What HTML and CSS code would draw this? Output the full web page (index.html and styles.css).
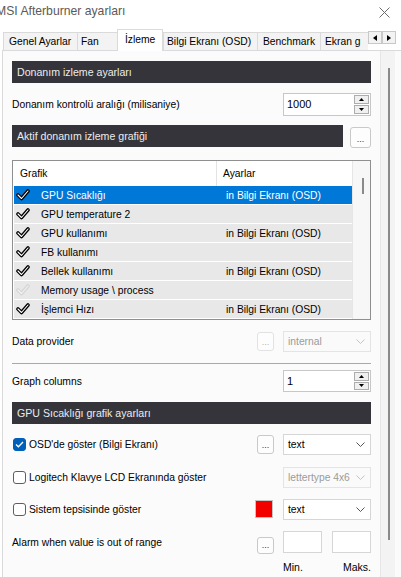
FILE: index.html
```html
<!DOCTYPE html>
<html lang="tr">
<head>
<meta charset="utf-8">
<title>MSI Afterburner ayarları</title>
<link rel="stylesheet" href="styles.css">
</head>
<body>
<div class="window">
  <div class="titlebar">
    <span class="title">MSI Afterburner ayarları</span>
    <svg class="close" width="11" height="11" viewBox="0 0 11 11"><path d="M0.5 0.5 L10.5 10.5 M10.5 0.5 L0.5 10.5" stroke="#6b6b6b" stroke-width="1"/></svg>
  </div>
  <div class="tabs">
    <div class="tab t1">Genel Ayarlar</div>
    <div class="tab t2">Fan</div>
    <div class="tab t3 active">İzleme</div>
    <div class="tab t4">Bilgi Ekranı (OSD)</div>
    <div class="tab t5">Benchmark</div>
    <div class="tab t6">Ekran g</div>
    <div class="tabarrows">
      <div class="tabarrow"><svg width="4" height="6" viewBox="0 0 4 6"><path d="M4 0 L0 3 L4 6 Z" fill="#000"/></svg></div>
      <div class="tabarrow"><svg width="4" height="6" viewBox="0 0 4 6"><path d="M0 0 L4 3 L0 6 Z" fill="#000"/></svg></div>
    </div>
  </div>
  <div class="panel">
    <div class="content">
      <div class="bar h1">Donanım izleme ayarları</div>

      <div class="row r1">
        <span class="label">Donanım kontrolü aralığı (milisaniye)</span>
        <div class="spin">
          <div class="spin-val">1000</div>
          <div class="spin-btns">
            <div class="spin-btn"><svg width="5" height="3" viewBox="0 0 5 3"><path d="M0 3 L2.5 0 L5 3 Z" fill="#000"/></svg></div>
            <div class="spin-btn"><svg width="5" height="3" viewBox="0 0 5 3"><path d="M0 0 L2.5 3 L5 0 Z" fill="#000"/></svg></div>
          </div>
        </div>
      </div>

      <div class="row r2">
        <div class="bar grow">Aktif donanım izleme grafiği</div>
        <div class="dots dots-lg">...</div>
      </div>

      <div class="list">
        <div class="list-main">
          <div class="list-head">
            <div class="col1">Grafik</div>
            <div class="col2">Ayarlar</div>
          </div>
          <div class="item sel"><span class="chk"><svg width="14" height="12" viewBox="0 0 14 12"><path d="M2 6 L5.5 9.5 L12 2" fill="none" stroke="#000" stroke-width="3.6" stroke-linejoin="round" stroke-linecap="round"/><path d="M2 6 L5.5 9.5 L12 2" fill="none" stroke="#fff" stroke-width="1.1" stroke-linejoin="round" stroke-linecap="round"/></svg></span><span class="c1">GPU Sıcaklığı</span><span class="c2">in Bilgi Ekranı (OSD)</span></div>
          <div class="item"><span class="chk"><svg width="14" height="12" viewBox="0 0 14 12"><path d="M2 6 L5.5 9.5 L12 2" fill="none" stroke="#000" stroke-width="3.6" stroke-linejoin="round" stroke-linecap="round"/><path d="M2 6 L5.5 9.5 L12 2" fill="none" stroke="#fff" stroke-width="1.1" stroke-linejoin="round" stroke-linecap="round"/></svg></span><span class="c1">GPU temperature 2</span><span class="c2"></span></div>
          <div class="item"><span class="chk"><svg width="14" height="12" viewBox="0 0 14 12"><path d="M2 6 L5.5 9.5 L12 2" fill="none" stroke="#000" stroke-width="3.6" stroke-linejoin="round" stroke-linecap="round"/><path d="M2 6 L5.5 9.5 L12 2" fill="none" stroke="#fff" stroke-width="1.1" stroke-linejoin="round" stroke-linecap="round"/></svg></span><span class="c1">GPU kullanımı</span><span class="c2">in Bilgi Ekranı (OSD)</span></div>
          <div class="item"><span class="chk"><svg width="14" height="12" viewBox="0 0 14 12"><path d="M2 6 L5.5 9.5 L12 2" fill="none" stroke="#000" stroke-width="3.6" stroke-linejoin="round" stroke-linecap="round"/><path d="M2 6 L5.5 9.5 L12 2" fill="none" stroke="#fff" stroke-width="1.1" stroke-linejoin="round" stroke-linecap="round"/></svg></span><span class="c1">FB kullanımı</span><span class="c2"></span></div>
          <div class="item"><span class="chk"><svg width="14" height="12" viewBox="0 0 14 12"><path d="M2 6 L5.5 9.5 L12 2" fill="none" stroke="#000" stroke-width="3.6" stroke-linejoin="round" stroke-linecap="round"/><path d="M2 6 L5.5 9.5 L12 2" fill="none" stroke="#fff" stroke-width="1.1" stroke-linejoin="round" stroke-linecap="round"/></svg></span><span class="c1">Bellek kullanımı</span><span class="c2">in Bilgi Ekranı (OSD)</span></div>
          <div class="item"><span class="chk"><svg width="14" height="12" viewBox="0 0 14 12"><path d="M2 6 L5.5 9.5 L12 2" fill="none" stroke="#d6d6d6" stroke-width="3.6" stroke-linejoin="round" stroke-linecap="round"/><path d="M2 6 L5.5 9.5 L12 2" fill="none" stroke="#f4f4f4" stroke-width="1.1" stroke-linejoin="round" stroke-linecap="round"/></svg></span><span class="c1">Memory usage \ process</span><span class="c2"></span></div>
          <div class="item"><span class="chk"><svg width="14" height="12" viewBox="0 0 14 12"><path d="M2 6 L5.5 9.5 L12 2" fill="none" stroke="#000" stroke-width="3.6" stroke-linejoin="round" stroke-linecap="round"/><path d="M2 6 L5.5 9.5 L12 2" fill="none" stroke="#fff" stroke-width="1.1" stroke-linejoin="round" stroke-linecap="round"/></svg></span><span class="c1">İşlemci Hızı</span><span class="c2">in Bilgi Ekranı (OSD)</span></div>
          <div class="item"><span class="chk"><svg width="14" height="12" viewBox="0 0 14 12"><path d="M2 6 L5.5 9.5 L12 2" fill="none" stroke="#000" stroke-width="3.6" stroke-linejoin="round" stroke-linecap="round"/><path d="M2 6 L5.5 9.5 L12 2" fill="none" stroke="#fff" stroke-width="1.1" stroke-linejoin="round" stroke-linecap="round"/></svg></span><span class="c1"></span><span class="c2"></span></div>
        </div>
        <div class="list-scroll"><div class="list-thumb"></div></div>
      </div>

      <div class="row r3">
        <span class="label">Data provider</span>
        <div class="ctrls">
          <div class="dots disabled">...</div>
          <div class="select disabled"><span>internal</span><svg width="9" height="5" viewBox="0 0 9 5"><path d="M0.5 0.5 L4.5 4.5 L8.5 0.5" fill="none" stroke="#c4c4c4" stroke-width="1"/></svg></div>
        </div>
      </div>

      <div class="sep"></div>

      <div class="row r4">
        <span class="label">Graph columns</span>
        <div class="spin spin-sm">
          <div class="spin-val">1</div>
          <div class="spin-btns">
            <div class="spin-btn"><svg width="5" height="3" viewBox="0 0 5 3"><path d="M0 3 L2.5 0 L5 3 Z" fill="#000"/></svg></div>
            <div class="spin-btn"><svg width="5" height="3" viewBox="0 0 5 3"><path d="M0 0 L2.5 3 L5 0 Z" fill="#000"/></svg></div>
          </div>
        </div>
      </div>

      <div class="bar h3">GPU Sıcaklığı grafik ayarları</div>

      <div class="row r5">
        <label class="cb"><span class="box on"><svg width="9" height="7" viewBox="0 0 9 7"><path d="M1 3.5 L3.4 5.8 L8 1" fill="none" stroke="#fff" stroke-width="1.3"/></svg></span>OSD'de göster (Bilgi Ekranı)</label>
        <div class="ctrls">
          <div class="dots">...</div>
          <div class="select"><span>text</span><svg width="9" height="5" viewBox="0 0 9 5"><path d="M0.5 0.5 L4.5 4.5 L8.5 0.5" fill="none" stroke="#555" stroke-width="1"/></svg></div>
        </div>
      </div>

      <div class="row r6">
        <label class="cb"><span class="box"></span>Logitech Klavye LCD Ekranında göster</label>
        <div class="ctrls">
          <div class="select disabled"><span>lettertype 4x6</span><svg width="9" height="5" viewBox="0 0 9 5"><path d="M0.5 0.5 L4.5 4.5 L8.5 0.5" fill="none" stroke="#c4c4c4" stroke-width="1"/></svg></div>
        </div>
      </div>

      <div class="row r7">
        <label class="cb"><span class="box"></span>Sistem tepsisinde göster</label>
        <div class="ctrls">
          <div class="swatch"></div>
          <div class="select"><span>text</span><svg width="9" height="5" viewBox="0 0 9 5"><path d="M0.5 0.5 L4.5 4.5 L8.5 0.5" fill="none" stroke="#555" stroke-width="1"/></svg></div>
        </div>
      </div>

      <div class="row r8">
        <span class="label alarm-label">Alarm when value is out of range</span>
        <div class="ctrls">
          <div class="dots dots-alarm">...</div>
          <div class="field"></div>
          <div class="field"></div>
        </div>
      </div>
      <div class="minmax">
        <span>Min.</span>
        <span>Maks.</span>
      </div>
    </div>
    <div class="vscroll"><div class="vthumb"></div></div>
  </div>
</div>
</body>
</html>
```

FILE: styles.css
```css
* { box-sizing: border-box; }
html, body { margin: 0; padding: 0; }
body {
  background: #ffffff;
  font-family: "Liberation Sans", Arial, sans-serif;
  font-size: 10.3px;
  color: #000;
}
.window {
  width: 401px;
  height: 577px;
  overflow: hidden;
  background: #ffffff;
}
.titlebar {
  height: 28px;
  display: flex;
  align-items: center;
  justify-content: space-between;
  padding-right: 11px;
}
.title {
  font-size: 12.2px;
  color: #5a5a5a;
  margin-left: -4px;
  margin-top: -7px;
}
.close { margin-top: -4px; }

.tabs {
  height: 22px;
  display: flex;
  align-items: flex-end;
  padding-left: 3px;
  position: relative;
}
.tab {
  height: 18px;
  background: #f3f3f3;
  border: 1px solid #dadada;
  border-bottom: none;
  border-right: none;
  padding-left: 5px;
  line-height: 17px;
  white-space: nowrap;
  overflow: hidden;
  color: #000;
}
.t1 { width: 74px; }
.t2 { width: 40px; padding-left: 3px; }
.t3 { width: 46px; }
.t4 { width: 94px; padding-left: 3px; }
.t5 { width: 63px; padding-left: 5px; }
.t6 { width: 48px; padding-left: 4px; }
.tab.active {
  height: 22px;
  background: #ffffff;
  border-right: 1px solid #dadada;
  padding-left: 7px;
  line-height: 20px;
  margin-bottom: -1px;
  position: relative;
  z-index: 1;
}
.tabarrows {
  display: flex;
  margin-bottom: 6px;
  margin-left: 0;
}
.tabarrow {
  width: 14px;
  height: 13px;
  background: #f3f3f3;
  border: 1px solid #c8c8c8;
  display: flex;
  align-items: center;
  justify-content: center;
}

.panel {
  display: flex;
  border-top: 1px solid #dadada;
  border-left: 1px solid #dadada;
  margin-left: 2px;
  background: #fbfbfb;
  height: 527px;
}
.content {
  width: 359px;
  margin-left: 9px;
  display: flex;
  flex-direction: column;
}
.vscroll {
  width: 15px;
  margin-left: 9px;
  background: #f3f3f3;
  border-left: 1px solid #e6e6e6;
  position: relative;
  padding-top: 17px;
}
.vthumb {
  width: 2px;
  height: 472px;
  margin-left: 7px;
  background: #8a8a8a;
}

.bar {
  height: 22px;
  background: #34343a;
  color: #ececec;
  padding-left: 5px;
  line-height: 22px;
  font-size: 10.6px;
}
.h1 { margin-top: 10px; }
.h3 { margin-top: 10px; }
.grow { flex: 1; }

.row {
  display: flex;
  align-items: center;
  justify-content: space-between;
}
.r1 { margin-top: 10px; height: 23px; }
.r2 { margin-top: 9px; height: 22px; gap: 7px; }
.r3 { margin-top: 11px; height: 20px; }
.r4 { margin-top: 6px; height: 22px; }
.r5 { margin-top: 10px; height: 21px; }
.r6 { margin-top: 12px; height: 20px; }
.r7 { margin-top: 12px; height: 20px; }
.r8 { margin-top: 12px; height: 22px; align-items: stretch; }
.alarm-label { align-self: center; }

.label { padding-left: 0; }

.spin {
  width: 88px;
  height: 23px;
  display: flex;
  background: #fff;
  border: 1px solid #c7c7c7;
}
.spin-sm { height: 22px; }
.spin-val {
  flex: 1;
  padding-left: 3px;
  line-height: 20px;
  font-size: 11px;
}
.spin-btns {
  width: 16px;
  display: flex;
  flex-direction: column;
  gap: 1px;
  padding: 1px 1px 1px 0;
}
.spin-btn {
  flex: 1;
  background: #f0f0f0;
  border: 1px solid #adadad;
  display: flex;
  align-items: center;
  justify-content: center;
}

.dots {
  width: 17px;
  height: 19px;
  border: 1px solid #c9c9c9;
  border-radius: 3px;
  background: #fdfdfd;
  display: flex;
  align-items: flex-end;
  justify-content: center;
  padding-bottom: 3px;
  font-size: 9px;
  line-height: 9px;
  color: #333;
}
.dots-lg { width: 21px; height: 21px; margin-top: 3px; }
.dots.disabled { color: #b0b0b0; border-color: #e2e2e2; }
.dots-alarm { height: 17px; margin-top: 6px; align-self: flex-start; }

.ctrls {
  display: flex;
  align-items: center;
  gap: 9px;
}
.r8 .ctrls { align-items: stretch; gap: 0; }
.r8 .dots { margin-right: 9px; }
.r8 .field + .field { margin-left: 10px; }

.select {
  width: 88px;
  height: 21px;
  background: #fff;
  border: 1px solid #d6d6d6;
  display: flex;
  align-items: center;
  justify-content: space-between;
  padding: 0 5px 0 4px;
}
.select.disabled { color: #9a9a9a; background: #fafafa; border-color: #e4e4e4; }

.field {
  width: 39px;
  height: 22px;
  background: #fff;
  border: 1px solid #d6d6d6;
}

.swatch {
  width: 18px;
  height: 18px;
  background: #f20000;
  border: 1px solid #c4c4c4;
  margin-right: 1px;
}

.sep {
  margin-top: 12px;
  height: 1px;
  background: #a9a9a9;
}

.cb {
  display: flex;
  align-items: center;
  gap: 3px;
  white-space: nowrap;
}
.box {
  width: 13px;
  height: 13px;
  border: 1px solid #5f5f5f;
  border-radius: 3px;
  background: #fff;
  margin-left: 1px;
  display: flex;
  align-items: center;
  justify-content: center;
}
.box.on { background: #005fb8; border-color: #005fb8; }

.minmax {
  display: flex;
  justify-content: space-between;
  width: 88px;
  align-self: flex-end;
  margin-top: 8px;
  font-size: 10.5px;
}

.list {
  margin-top: 13px;
  height: 160px;
  border: 1px solid #8f8f8f;
  background: #fff;
  display: flex;
  overflow: hidden;
}
.list-main {
  flex: 1;
  overflow: hidden;
}
.list-head {
  height: 25px;
  display: flex;
  align-items: center;
}
.col1 {
  width: 204px;
  height: 100%;
  line-height: 25px;
  padding-left: 7px;
  border-right: 1px solid #e3e3e3;
}
.col2 { padding-left: 6px; }
.item {
  height: 18px;
  margin-bottom: 1px;
  background: #e8e8e8;
  display: flex;
  align-items: center;
  margin-left: 1px;
}
.item.sel { background: #0078d7; color: #fff; }
.chk { width: 27px; padding-left: 2px; display: flex; align-items: center; }
.c1 { width: 185px; }
.c2 { padding-left: 0; }
.list-scroll {
  width: 18px;
  border-left: 1px solid #e6e6e6;
  background: #f7f7f7;
  padding-top: 17px;
}
.list-thumb {
  width: 2px;
  height: 16px;
  background: #8a8a8a;
  margin-left: 9px;
}
```
